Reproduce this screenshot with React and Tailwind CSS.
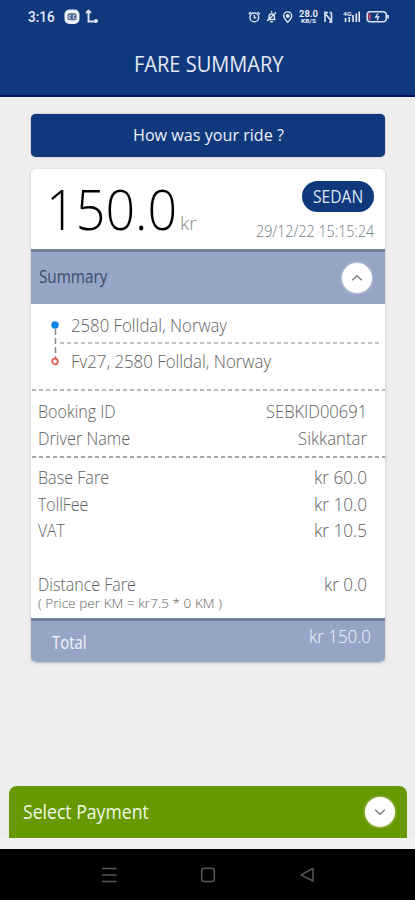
import { useLayoutEffect, useRef, useState } from 'react';

function Label({ w, className = '', children }) {
  const ref = useRef(null);
  const [scale, setScale] = useState(1);
  useLayoutEffect(() => {
    const measure = () => {
      if (ref.current && ref.current.offsetWidth) setScale(w / ref.current.offsetWidth);
    };
    measure();
    document.fonts?.ready.then(measure);
  }, [w]);
  return (
    <span className={`block whitespace-nowrap ${className}`} style={{ width: w }}>
      <span ref={ref} className="inline-block origin-left" style={{ transform: `scaleX(${scale})` }}>
        {children}
      </span>
    </span>
  );
}

function Row({ label, lw, value, vw }) {
  return (
    <div className="flex h-[26.5px] items-center justify-between pl-[7px] pr-[18px] text-[17.5px] leading-[22px] text-[#606060]">
      <Label w={lw}>{label}</Label>
      <Label w={vw}>{value}</Label>
    </div>
  );
}

function Dashes({ color = '#a0a0a0', className = '' }) {
  return (
    <svg className={`block h-[2px] w-full ${className}`}>
      <line x1="1" y1="1" x2="100%" y2="1" stroke={color} strokeWidth="1.6" strokeDasharray="4 3" />
    </svg>
  );
}

function Chevron({ up }) {
  return (
    <span className="flex h-[30px] w-[30px] items-center justify-center rounded-full bg-white shadow-[0_0_3px_rgba(255,255,255,0.7)]">
      <svg width="12" height="8" viewBox="0 0 12 8" fill="none" stroke="#808080" strokeWidth="1.5">
        <path d={up ? 'M1.2 6.3 6 1.7l4.8 4.6' : 'M1.2 1.7 6 6.3l4.8-4.6'} />
      </svg>
    </span>
  );
}

function StatusIcons() {
  return (
    <svg className="block h-[18px] w-[145px]" viewBox="245 8 145 18" fill="none" stroke="#dde5f4" strokeWidth="1.4">
      <circle cx="254.3" cy="17.4" r="4.4" />
      <path d="M254.3 15v2.8h2M248.7 14.2l2.4-2.3M259.9 14.2l-2.4-2.3" />
      <path d="M267.5 19.5h8M269 19v-3.2a2.8 2.8 0 0 1 5.4 0V19M271.6 11v1.5M270.4 21.8h2.5M267 21l9-8.5" />
      <path d="M287.7 22.2c-2.8-2.9-4-4.6-4-6.3a4 4 0 0 1 8 0c0 1.7-1.2 3.4-4 6.3z" />
      <circle cx="287.7" cy="16" r="1.3" fill="#dde5f4" />
      <g fill="#e6ecf8" stroke="none" fontFamily="Roboto, sans-serif" fontWeight="700">
        <text x="299" y="17" fontSize="8.5" textLength="19" lengthAdjust="spacingAndGlyphs">28.0</text>
        <text x="301" y="23" fontSize="6" textLength="15" lengthAdjust="spacingAndGlyphs">KB/S</text>
        <text x="343" y="16" fontSize="5.5" textLength="8.5" lengthAdjust="spacingAndGlyphs">4G</text>
      </g>
      <path d="M325 22v-9l6.5 8.5v-9M325 12.500h3M329 22h3M331.5 12.500h-2" strokeWidth="1.6" />
      <path d="M345.5 22v-4M349.300 22v-5M353 22v-7M356.300 22v-8.5M359.200 22V11.500" strokeWidth="1.7" />
      <rect x="367.2" y="11.8" width="19" height="10" rx="3" strokeWidth="1.5" />
      <path d="M388 15v3.5" strokeWidth="1.8" />
      <path d="M369.600 14v5.5" stroke="#e0485c" strokeWidth="2" />
      <path d="m378 13.500-2.300 3.500h3l-1.700 3.200" strokeWidth="1.3" />
    </svg>
  );
}

export default function App() {
  return (
    <div className="flex h-[900px] w-[415px] flex-col overflow-hidden bg-[#ededed] font-['Open_Sans','Noto_Sans',sans-serif] font-light">
      <header className="h-[97px] border-b-2 border-[#08106e] bg-[#10387c] text-[#e3e9f6]">
        <div className="flex h-[34px] items-center pl-[28px] pr-[25px]">
          <Label w={27} className="font-['Roboto',sans-serif] text-[14px] font-medium">3:16</Label>
          <svg className="ml-[9px] block h-[18px] w-[36px]" viewBox="64 8 36 18" fill="none">
            <rect x="64.500" y="9.500" width="15" height="14.500" rx="5" fill="#eef1f8" />
            <rect x="67.500" y="13.300" width="9" height="7" rx="2" fill="#4d6692" />
            <path d="M71 15.300h-2v3h2M75.300 15.300h-2v3h2" stroke="#dfe6f2" strokeWidth="0.900" />
            <path d="M88.500 12.500V21.500H96M86 13l2.500-2.300L91 13" stroke="#dde5f4" strokeWidth="1.900" />
            <circle cx="88.500" cy="11.500" r="1.700" fill="#dde5f4" />
            <circle cx="96" cy="21" r="2" fill="#dde5f4" />
          </svg>
          <div className="ml-auto">
            <StatusIcons />
          </div>
        </div>
        <h1 className="flex h-[60px] items-center justify-center pl-[2px] text-[21.5px] leading-[60px] font-normal">
          <Label w={150}>FARE SUMMARY</Label>
        </h1>
      </header>

      <main className="flex flex-1 flex-col pl-[31px] pr-[30px] pt-[17px]">
        <button className="flex h-[43px] shrink-0 items-start justify-center rounded-[5px] bg-[#10387c] text-[17px] leading-[41px] font-medium text-[#eef2fa] shadow-[0_0_1px_#08106e]">
          <Label w={151}>How was your ride ?</Label>
        </button>

        <section className="mt-3 flex h-[493px] shrink-0 flex-col overflow-hidden rounded-[5px] bg-white shadow-[0_1px_3px_rgba(0,0,0,0.22)]">
          <div className="flex h-[80px] justify-between pl-[15px] pr-[11px]">
            <div className="flex items-start">
              <Label w={131} className="text-[56px] leading-[78px] font-[350] text-black">150.0</Label>
              <Label w={17} className="ml-[3px] pt-[14px] text-[18px] leading-[80px] text-[#888]">kr</Label>
            </div>
            <div className="flex flex-col items-end pt-3">
              <div className="flex h-[31px] w-[72px] items-center justify-center rounded-full bg-[#10387c] text-[17.5px] leading-[28px] font-normal text-[#e0e7f5]">
                <Label w={50} className="-mt-[2px]">SEDAN</Label>
              </div>
              <Label w={118} className="mt-[7px] text-[16px] leading-6 text-[#6e7a82]">29/12/22 15:15:24</Label>
            </div>
          </div>

          <div className="flex h-[55px] items-center justify-between border-t-[3px] border-[#737f99] bg-[#96a5c5] pl-[8px] pr-[13px] text-[17.5px] font-normal text-[#3c4b68]">
            <Label w={68} className="-mt-[3px]">Summary</Label>
            <div className="-mt-[1px]">
              <Chevron up />
            </div>
          </div>

          <div className="flex h-[85px] pl-[19px]">
            <svg className="block h-[85px] w-[12px] shrink-0" viewBox="0 0 12 85" fill="none">
              <path d="M5.500 25v29" stroke="#888" strokeWidth="1.500" strokeDasharray="6 3" />
              <circle cx="5" cy="21" r="3.700" fill="#0c86e4" />
              <circle cx="5" cy="57.500" r="2.800" stroke="#e95d50" strokeWidth="1.800" fill="#fff" />
            </svg>
            <div className="flex-1 pt-[9px] text-[17.5px] leading-[24px] text-[#606060]">
              <Label w={156} className="ml-[9px]">2580 Folldal, Norway</Label>
              <Dashes className="mt-[5px] -ml-[3px]" color="#b0b0b0" />
              <Label w={200} className="mt-[5px] ml-[9px]">Fv27, 2580 Folldal, Norway</Label>
            </div>
          </div>

          <Dashes />
          <div className="h-[65px] pt-[7px]">
            <Row label="Booking ID" lw={78} value="SEBKID00691" vw={101} />
            <Row label="Driver Name" lw={92} value="Sikkantar" vw={69} />
          </div>
          <Dashes color="#888888" />

          <div className="h-[160px] pt-[6px]">
            <Row label="Base Fare" lw={71} value="kr 60.0" vw={53} />
            <Row label="TollFee" lw={50} value="kr 10.0" vw={53} />
            <Row label="VAT" lw={27} value="kr 10.5" vw={53} />
            <div className="h-[27.5px]" />
            <Row label="Distance Fare" lw={98} value="kr 0.0" vw={43} />
            <Label w={184} className="-mt-[2px] ml-[7px] text-[13.5px] leading-[14px] text-[#606060]">
              ( Price per KM = kr7.5 * 0 KM )
            </Label>
          </div>

          <div className="flex h-[44px] items-start justify-between border-t-[3px] border-[#737f99] bg-[#96a5c5] pl-[21px] pr-[14px] text-[17.5px] leading-[26px] text-[#f1f4fb]">
            <Label w={35} className="pt-[8px] font-medium">Total</Label>
            <Label w={62} className="pt-[2px]">kr 150.0</Label>
          </div>
        </section>
      </main>

      <div className="bg-[#ededed] pl-[9px] pr-[8px]">
        <div className="flex h-[52px] items-center justify-between rounded-t-[8px] bg-[#669900] pl-[14px] pr-[12px] text-[20px] font-medium text-[#f1f8e5]">
          <Label w={126}>Select Payment</Label>
          <Chevron />
        </div>
      </div>
      <div className="h-[11px] shrink-0 bg-[#f1f1f1]" />

      <nav className="flex h-[51px] shrink-0 justify-center bg-black">
        <svg className="block h-[51px] w-[230px]" viewBox="93 849 230 51" fill="none" stroke="#585858" strokeWidth="1.500">
          <path d="M102 868.500h14.500M102 875h14.500M102 881.500h14.500" />
          <rect x="201.700" y="868.200" width="12.600" height="13.300" rx="2.500" />
          <path d="M313 868.500v12.500l-12-6.200z" strokeLinejoin="round" />
        </svg>
      </nav>
    </div>
  );
}
